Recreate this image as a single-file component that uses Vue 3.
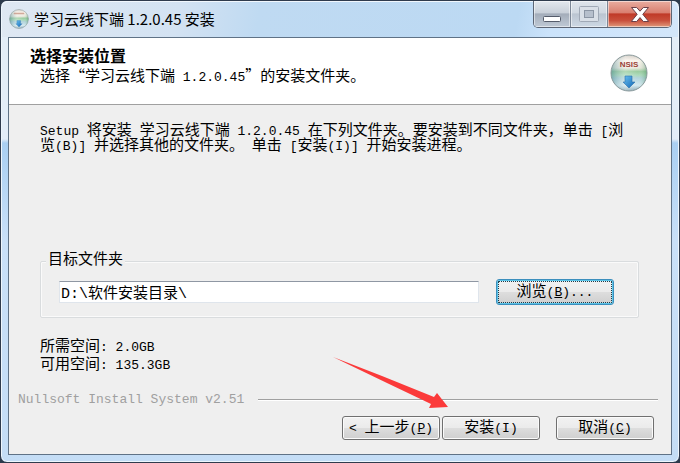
<template>
  <div class="window">
    <header class="title-bar">
      <svg class="title-icon" viewBox="0 0 38 38" aria-hidden="true">
        <use href="#disc" />
        <rect x="9" y="7" width="20" height="3" fill="#c08a78" opacity="0.7" />
      </svg>
      <h1 class="title-text">学习云线下端 1.2.0.45 安装</h1>
      <div class="caption-buttons">
        <button type="button" class="caption minimize" aria-label="最小化">
          <svg width="20" height="8" viewBox="0 0 20 8">
            <rect x="1.5" y="1.5" width="17" height="5" rx="1" fill="#fff" stroke="#555c6b" />
          </svg>
        </button>
        <button type="button" class="caption maximize" aria-label="最大化" disabled>
          <svg width="20" height="17" viewBox="0 0 20 17">
            <rect x="0.5" y="0.5" width="19" height="15" rx="1" fill="#d9dfe7" stroke="#a0a9b6" />
            <rect x="5.5" y="4.5" width="9" height="7" fill="#b6bfcc" stroke="#8b95a4" />
          </svg>
        </button>
        <button type="button" class="caption close" aria-label="关闭">
          <svg width="20" height="17" viewBox="0 0 20 17">
            <path
              d="M1.5 1.5h5.2L10 5.2l3.3-3.7h5.2l-5.7 6.8 5.9 7.2h-5.4L10 11.6l-3.3 3.9H1.3l5.9-7.2z"
              fill="#fff"
              stroke="#6b4048"
              stroke-linejoin="round"
            />
          </svg>
        </button>
      </div>
    </header>

    <main class="client">
      <section class="page-header">
        <div class="page-heading">
          <h2 class="page-title">选择安装位置</h2>
          <p class="page-subtitle">
            选择“学习云线下端<span class="en"> 1.2.0.45</span>”的安装文件夹。
          </p>
        </div>
        <svg class="disc-icon" viewBox="0 0 38 38" aria-hidden="true">
          <defs>
            <linearGradient id="discBody" x1="0" y1="0" x2="0" y2="1">
              <stop offset="0" stop-color="#c9c5bd" />
              <stop offset="0.16" stop-color="#fbf3ea" />
              <stop offset="0.36" stop-color="#e9e6da" />
              <stop offset="0.46" stop-color="#8fc795" />
              <stop offset="0.56" stop-color="#a3d6b4" />
              <stop offset="0.64" stop-color="#a9cfd8" />
              <stop offset="0.84" stop-color="#cfe6ee" />
              <stop offset="1" stop-color="#7d9fac" />
            </linearGradient>
            <linearGradient id="discShine" x1="0" y1="0" x2="1" y2="0">
              <stop offset="0" stop-color="#4f8d96" stop-opacity="0.55" />
              <stop offset="0.4" stop-color="#fff" stop-opacity="0.3" />
              <stop offset="0.75" stop-color="#fff" stop-opacity="0.1" />
              <stop offset="1" stop-color="#4b9566" stop-opacity="0.5" />
            </linearGradient>
            <linearGradient id="discArrow" x1="0" y1="0" x2="1" y2="1">
              <stop offset="0" stop-color="#6cc3f2" />
              <stop offset="1" stop-color="#1165b5" />
            </linearGradient>
            <g id="disc">
              <circle cx="19" cy="19" r="18" fill="url(#discBody)" />
              <circle cx="19" cy="19" r="18" fill="url(#discShine)" stroke="#8b9a9c" />
              <path
                d="M15 22h7v6h3l-6 6-6-6h2z"
                fill="url(#discArrow)"
                stroke="#2d6ea8"
                stroke-width="0.6"
              />
            </g>
          </defs>
          <use href="#disc" />
          <text class="disc-text" x="19" y="13" text-anchor="middle">NSIS</text>
        </svg>
      </section>

      <form class="page-body" @submit.prevent>
        <p class="description">
          <span class="en">Setup </span>将安装<span class="en">&nbsp;</span>学习云线下端<span class="en"> 1.2.0.45 </span>在下列文件夹。要安装到不同文件夹，单击<span class="en"> [</span>浏<br />
          览<span class="en">(B)] </span>并选择其他的文件夹。<span class="en">&nbsp;</span>单击<span class="en"> [</span>安装<span class="en">(I)] </span>开始安装进程。
        </p>

        <fieldset class="folder-group">
          <legend><label for="folder">目标文件夹</label></legend>
          <div class="folder-row">
            <input id="folder" v-model="folder" type="text" class="folder-input" spellcheck="false" />
            <button type="button" class="btn browse">浏览<span class="en">(<u>B</u>)...</span></button>
          </div>
        </fieldset>

        <div class="space-info">
          <p v-for="item in spaces" :key="item.label">
            {{ item.label }}<span class="en">: {{ item.size }}</span>
          </p>
        </div>

        <div class="branding">
          <span class="en">Nullsoft Install System v2.51</span>
          <span class="rule"></span>
        </div>

        <div class="actions">
          <button type="button" class="btn"><span class="en">&lt; </span>上一步<span class="en">(<u>P</u>)</span></button>
          <button type="submit" class="btn">安装<span class="en">(I)</span></button>
          <button type="button" class="btn cancel">取消<span class="en">(<u>C</u>)</span></button>
        </div>
      </form>

      <svg class="pointer" width="120" height="56" viewBox="0 0 120 56" aria-hidden="true">
        <path d="M3 2L52 21 104 42 107 38 118 52 99 53 101 49 57 28z" fill="#fb3a3a" />
      </svg>
    </main>
  </div>
</template>

<script setup>
import { ref } from 'vue';

const folder = ref('D:\\软件安装目录\\');

const spaces = [
  { label: '所需空间', size: '2.0GB' },
  { label: '可用空间', size: '135.3GB' },
];
</script>

<style>
body {
  margin: 0;
  background: #2c3a4c;
}
</style>

<style scoped>
.window {
  box-sizing: border-box;
  min-height: 100vh;
  display: flex;
  flex-direction: column;
  padding: 0 7px 7px;
  border: 1px solid #2f3b4d;
  border-radius: 7px;
  background:
    linear-gradient(180deg, #e3edf8 0, #e3edf8 138px, #a9cff2 142px, #c9e0f8 240px, #c4ddf6 100%);
  box-shadow: inset 0 0 0 1px #eef6fd;
  color: #000;
  font-family: "Liberation Mono", "Noto Sans CJK SC", monospace;
  font-size: 15px;
}

h1,
h2,
p {
  margin: 0;
  font-weight: normal;
}

.en {
  font-family: "Liberation Mono", monospace;
  font-size: 13px;
  line-height: 1px;
}

.title-bar {
  display: flex;
  align-items: center;
  height: 36px;
  margin: 0 -6px;
  padding-left: 7px;
  border-radius: 6px 6px 0 0;
  background: linear-gradient(100deg, #dfe8f3 0%, #d3e2f2 26%, #bfdaf2 38%, #bcd9f3 76%, #cbe3fb 81%, #d3e6fa 100%);
  box-shadow: inset 0 1px #f1f7fd;
}

.title-icon {
  width: 20px;
  height: 20px;
}

.title-text {
  flex: 1;
  margin-left: 5px;
  font-family: "Noto Sans CJK SC", sans-serif;
  font-size: 15px;
  line-height: 20px;
}

.caption-buttons {
  display: flex;
  align-self: flex-start;
  margin-right: 6px;
  border: 1px solid #5d6675;
  border-top: 0;
  border-radius: 0 0 5px 5px;
  overflow: hidden;
}

.caption {
  display: flex;
  align-items: center;
  justify-content: center;
  box-sizing: border-box;
  width: 37px;
  height: 26px;
  padding: 0;
  border: 0;
  border-right: 1px solid #7c8796;
  background: linear-gradient(#e3e8ee 0, #c9d0d9 45%, #a4adba 50%, #bfc9d5 100%);
  box-shadow: inset 0 0 0 1px rgba(255, 255, 255, 0.5);
}

.minimize {
  align-items: flex-end;
  padding-bottom: 4px;
}

.maximize {
  background: linear-gradient(#dfe5ec 0, #d0d8e1 45%, #bbc5d1 50%, #cdd8e4 100%);
}

.close {
  width: 63px;
  border-right: 0;
  background: linear-gradient(#e9ada0 0, #d97f70 45%, #c03a28 50%, #c9503c 75%, #e09a7c 100%);
}

.client {
  position: relative;
  flex: 1;
  display: flex;
  flex-direction: column;
  border: 1px solid #5f7286;
  background: #efefef;
}

.page-header {
  display: flex;
  justify-content: space-between;
  align-items: center;
  box-sizing: border-box;
  height: 67px;
  padding: 0 23px 0 21px;
  border-bottom: 1px solid #a0a0a0;
  background: #fff;
}

.page-heading {
  padding-bottom: 13px;
  font-family: "Noto Sans CJK SC", sans-serif;
}

.page-title {
  font-size: 16px;
  font-weight: bold;
  line-height: 20px;
}

.page-subtitle {
  margin-left: 10px;
  line-height: 20px;
}

.disc-icon {
  width: 38px;
  height: 38px;
  margin-top: 4px;
}

.disc-text {
  fill: #9c4238;
  font-family: "Liberation Sans", sans-serif;
  font-size: 8px;
  font-weight: bold;
}

.page-body {
  flex: 1;
  display: flex;
  flex-direction: column;
  padding: 19px 17px 14px 9px;
}

.description {
  flex: 1;
  margin-left: 22px;
  line-height: 15px;
}

.folder-group {
  min-width: 0;
  margin: 16px 15px 0 22px;
  padding: 9px 24px 12px 18px;
  border: 1px solid #d9dcde;
  border-radius: 2px;
  box-shadow: inset 0 0 0 1px #fafafa;
}

.folder-group legend {
  margin-left: -13px;
  padding: 0 2px;
  background: #efefef;
  line-height: 18px;
}

.folder-row {
  display: flex;
  align-items: center;
  gap: 17px;
}

.folder-input {
  flex: 1;
  min-width: 0;
  box-sizing: border-box;
  height: 22px;
  padding: 0 1px;
  border: 1px solid #dfe5ec;
  border-top-color: #8f97a3;
  background: #fff;
  color: #000;
  font-family: "Liberation Mono", "Noto Sans CJK SC", monospace;
  font-size: 15px;
  outline: none;
}

.btn {
  box-sizing: border-box;
  width: 98px;
  height: 24px;
  padding: 2px 0 0;
  border: 1px solid #707070;
  border-radius: 3px;
  background: linear-gradient(#f2f2f2 0, #ebebeb 48%, #dddddd 52%, #cfcfcf 100%);
  box-shadow: inset 0 0 0 1px #fbfbfb;
  color: #000;
  font-family: "Liberation Mono", "Noto Sans CJK SC", monospace;
  font-size: 15px;
  line-height: 20px;
  white-space: nowrap;
}

.browse {
  width: 118px;
  height: 26px;
  border-color: #3c8fbd;
  box-shadow: inset 0 0 0 1px #5cc4e8;
  outline: 1px dotted #1d3c4a;
  outline-offset: -3px;
}

.space-info {
  margin: 21px 0 0 22px;
  line-height: 18px;
}

.branding {
  display: flex;
  align-items: center;
  gap: 14px;
  margin-top: 15px;
  height: 18px;
  color: #a0a0a0;
}

.rule {
  flex: 1;
  height: 1px;
  margin-right: -4px;
  background: #a0a0a0;
  box-shadow: 0 1px #fff;
}

.actions {
  display: flex;
  justify-content: flex-end;
  gap: 2px;
  margin-top: 8px;
}

.cancel {
  margin-left: 14px;
}

.pointer {
  position: absolute;
  right: 221px;
  bottom: 43px;
  pointer-events: none;
}
</style>
